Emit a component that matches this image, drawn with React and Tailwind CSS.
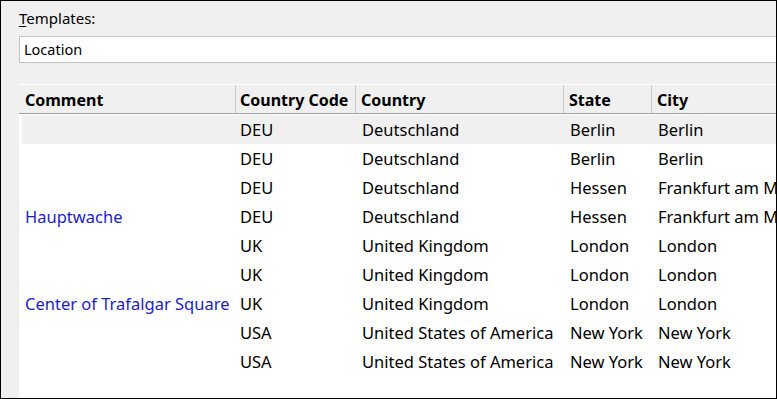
import React from 'react';

const rows = [
  { comment: '', code: 'DEU', country: 'Deutschland', state: 'Berlin', city: 'Berlin' },
  { comment: '', code: 'DEU', country: 'Deutschland', state: 'Berlin', city: 'Berlin' },
  { comment: '', code: 'DEU', country: 'Deutschland', state: 'Hessen', city: 'Frankfurt am Main' },
  { comment: 'Hauptwache', code: 'DEU', country: 'Deutschland', state: 'Hessen', city: 'Frankfurt am Main' },
  { comment: '', code: 'UK', country: 'United Kingdom', state: 'London', city: 'London' },
  { comment: '', code: 'UK', country: 'United Kingdom', state: 'London', city: 'London' },
  { comment: 'Center of Trafalgar Square', code: 'UK', country: 'United Kingdom', state: 'London', city: 'London' },
  { comment: '', code: 'USA', country: 'United States of America', state: 'New York', city: 'New York' },
  { comment: '', code: 'USA', country: 'United States of America', state: 'New York', city: 'New York' },
];

export default function App() {
  return (
    <div
      className="w-[777px] h-[399px] border border-black bg-[#f0f0f0] overflow-hidden flex flex-col text-[15px] text-black"
      style={{ fontFamily: '"Noto Sans", "Open Sans", sans-serif' }}
    >
      <div className="pl-[18px] pt-[7px] h-[35px] leading-5">
        <span className="underline underline-offset-2">T</span>emplates:
      </div>
      <div className="ml-[18px] h-[27px] bg-white border border-[#c4c4c4] border-r-0 pl-[4px] flex items-center text-[14.5px]">
        Location
      </div>
      <div className="ml-[18px] mt-[21px] flex-1 flex flex-col bg-white overflow-hidden text-[16.5px]">
        <div className="grid grid-cols-[216px_120px_208px_88px_200px] h-[30px] bg-[#f0f0f0] border-t border-white border-b border-b-[#a0a0a0] font-bold text-[16px]">
          <div className="pl-[6px] pt-[1px] flex items-center">Comment</div>
          <div className="pl-[4px] pt-[1px] flex items-center border-l border-[#c8c8c8]">Country Code</div>
          <div className="pl-[5px] pt-[1px] flex items-center border-l border-[#c8c8c8]">Country</div>
          <div className="pl-[5px] pt-[1px] flex items-center border-l border-[#c8c8c8]">State</div>
          <div className="pl-[5px] pt-[1px] flex items-center border-l border-[#c8c8c8]">City</div>
        </div>
        <div className="flex flex-col pl-[3px] pt-[1px]">
          {rows.map((r, i) => (
            <div
              key={i}
              className={`grid grid-cols-[213px_120px_208px_88px_200px] h-[29px] pt-[2px] items-center whitespace-nowrap ${i === 0 ? 'bg-[#f0f0f0]' : ''}`}
            >
              <div className="pl-[3px] text-[#1c1cc8]">{r.comment}</div>
              <div className="pl-[5px]">{r.code}</div>
              <div className="pl-[7px]">{r.country}</div>
              <div className="pl-[7px]">{r.state}</div>
              <div className="pl-[7px]">{r.city}</div>
            </div>
          ))}
        </div>
      </div>
    </div>
  );
}
